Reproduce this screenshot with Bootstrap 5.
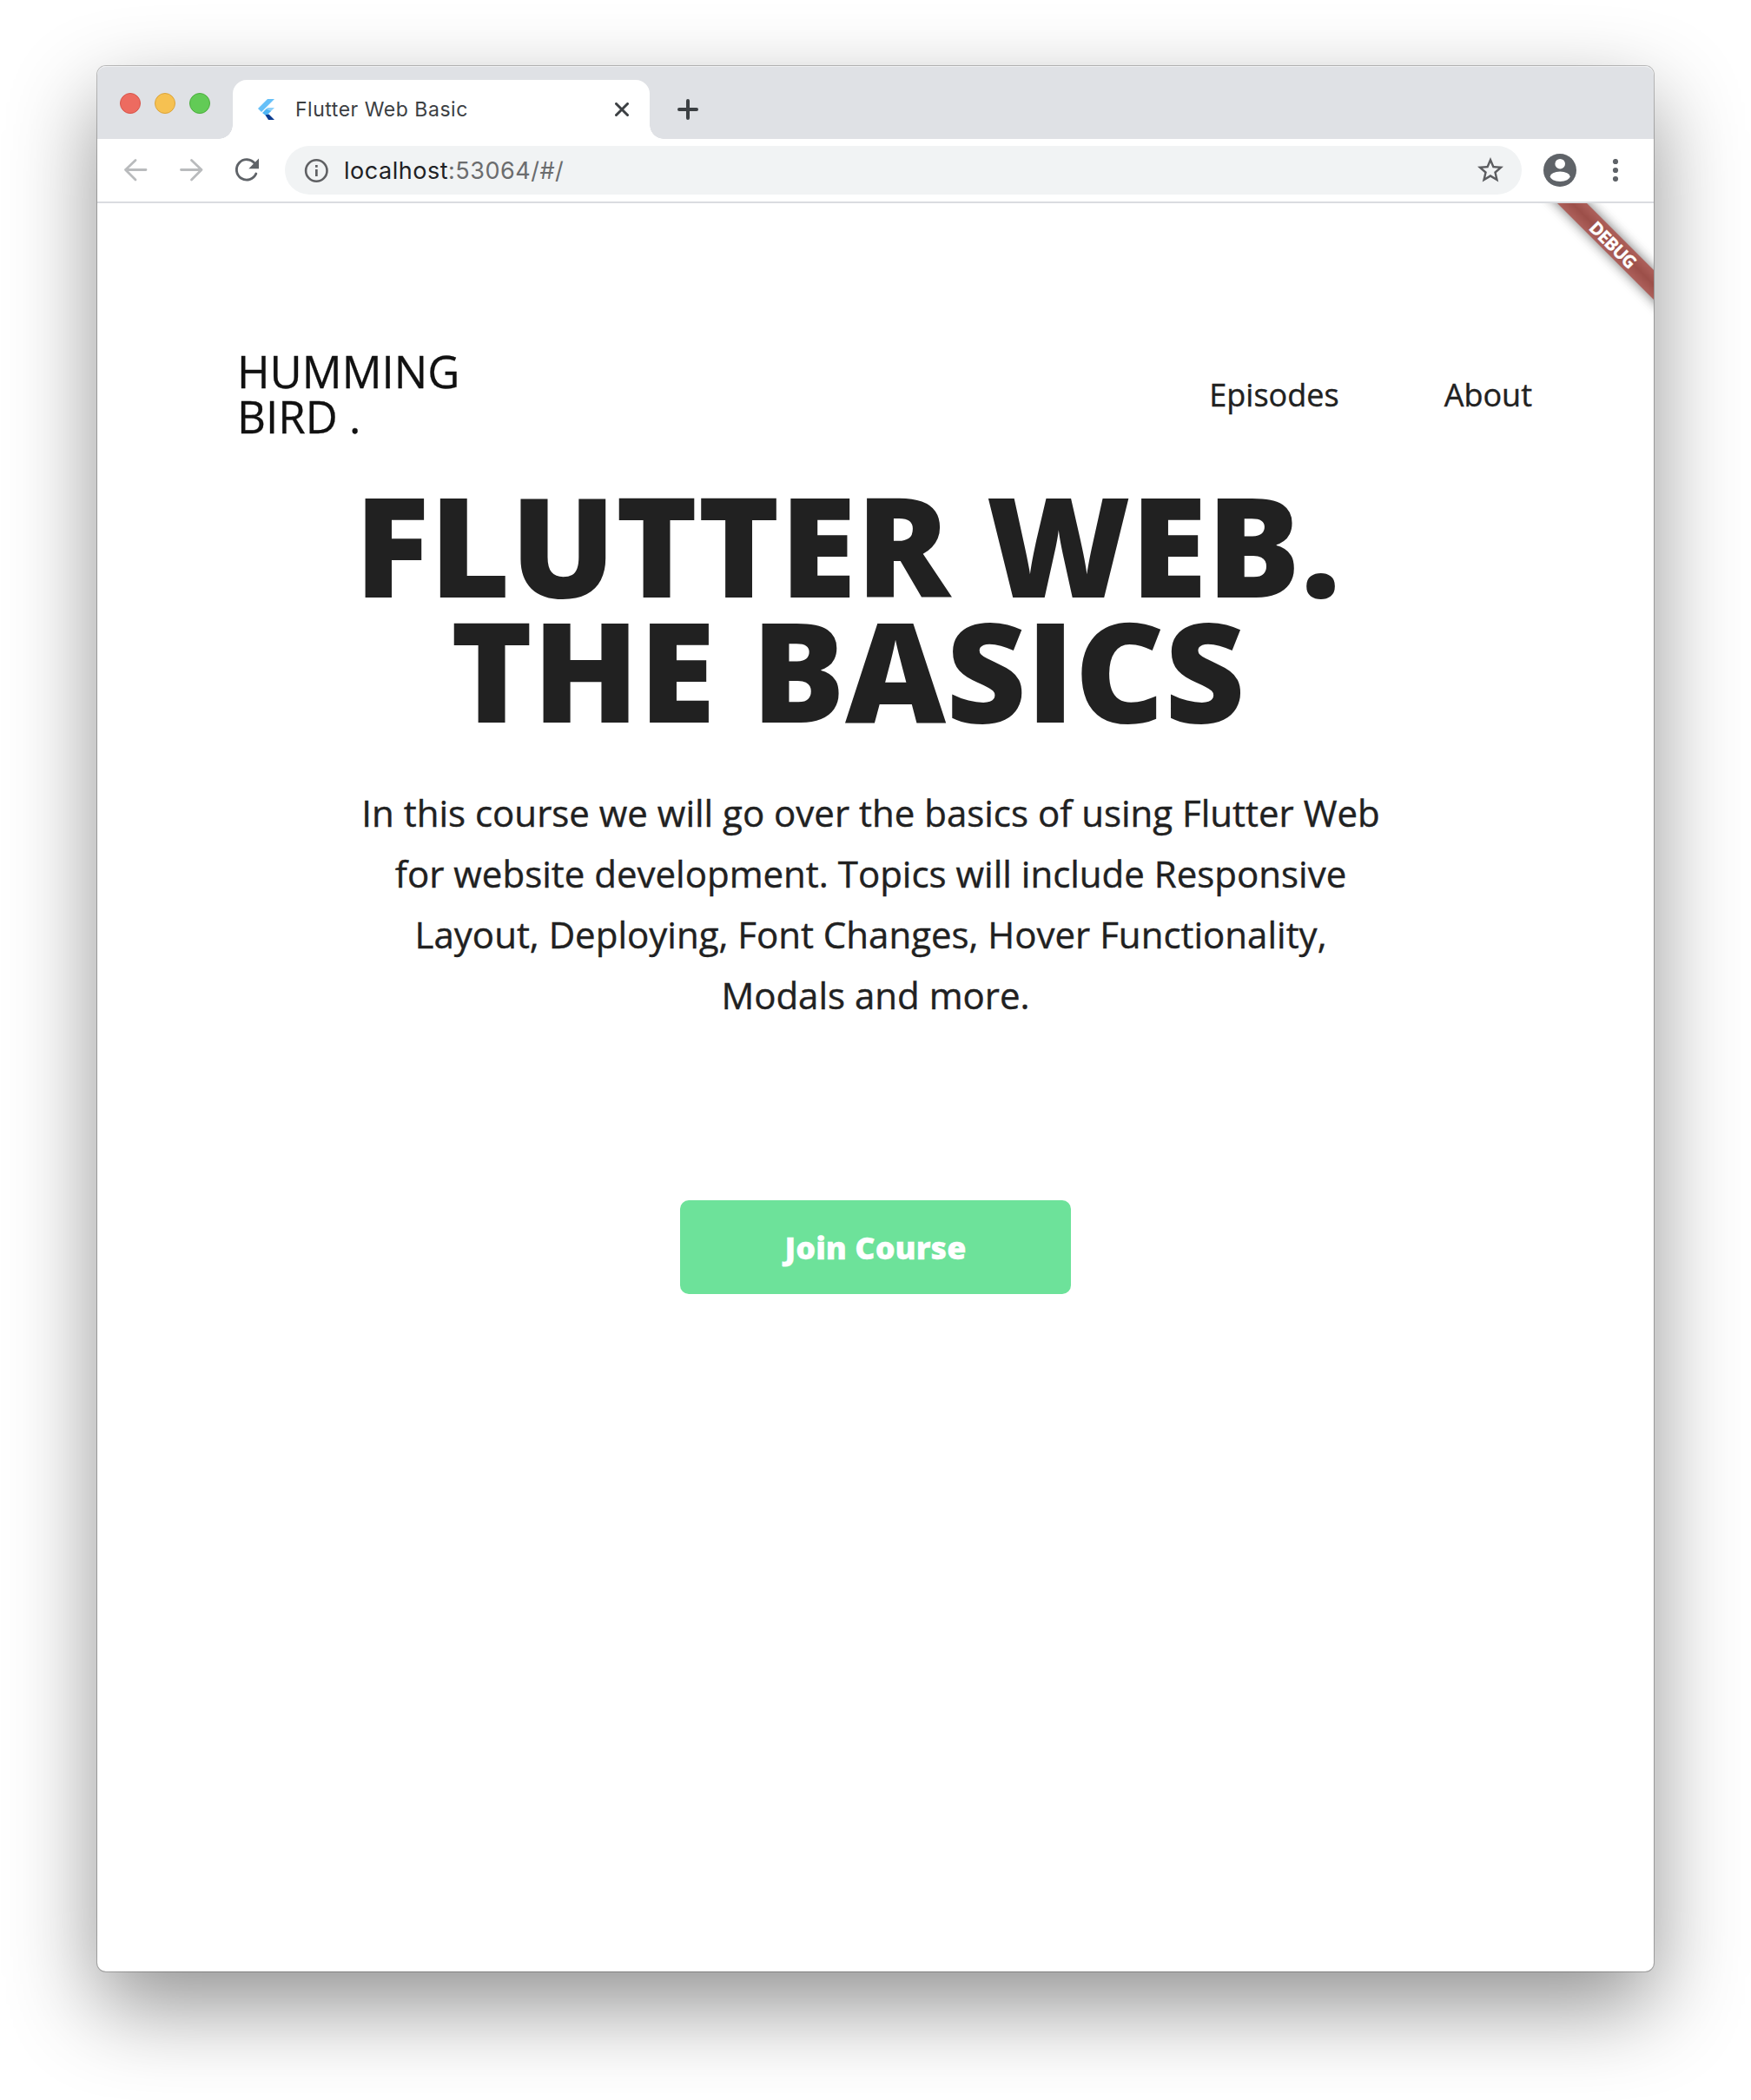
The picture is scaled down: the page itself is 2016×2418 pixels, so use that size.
<!DOCTYPE html>
<html lang="en">
<head>
<meta charset="utf-8">
<meta name="viewport" content="width=device-width, initial-scale=1">
<title>Flutter Web Basic</title>
<link href="https://cdn.jsdelivr.net/npm/bootstrap@5.3.0/dist/css/bootstrap.min.css" rel="stylesheet">
<style>
  body { background: #fff; font-family: "Open Sans", sans-serif; color: #212121; }
  .stage { height: 2418px; padding: 76px 112px 148px; }
  .browser { border-radius: 10px; background: #fff; box-shadow: 0 0 0 1px rgba(0,0,0,.24), 0 40px 100px rgba(0,0,0,.43); }
  .chrome-ui { font-family: Inter, sans-serif; }
  .tabstrip { height: 84px; background: #dfe1e5; border-radius: 10px 10px 0 0; box-shadow: inset 0 1px 0 #eff0f2; padding: 16px 0 0 26px; }
  .lights { gap: 16px; height: 54px; margin-right: 26px; }
  .light { width: 24px; height: 24px; border-radius: 50%; border: 1px solid; }
  .light-close { background: #ed6b60; border-color: #d8554a; }
  .light-min { background: #f6c151; border-color: #dba43b; }
  .light-max { background: #62cb56; border-color: #4cae3d; }
  .tab-item { width: 480px; height: 68px; background: #fff; border-radius: 16px 16px 0 0; padding: 0 24px; color: #3c4043; font-size: 23px; }
  .tab-item::before, .tab-item::after { content: ""; position: absolute; bottom: 0; width: 16px; height: 16px; }
  .tab-item::before { left: -16px; background: radial-gradient(circle at 0 0, transparent 15.5px, #fff 16px); }
  .tab-item::after { right: -16px; background: radial-gradient(circle at 100% 0, transparent 15.5px, #fff 16px); }
  .tab-icon { margin-left: -2px; }
  .tab-label { margin-left: 16px; letter-spacing: .53px; line-height: 68px; }
  .new-tab { margin-left: 32px; height: 68px; }
  .toolbar { height: 74px; border-bottom: 2px solid #dadce0; padding: 0 24px 0 24px; }
  .omnibox { width: 1424px; height: 56px; border-radius: 28px; background: #f1f3f4; padding: 0 18px 0 20px; margin-left: 24px; font-size: 27px; color: #202124; line-height: 56px; }
  .omnibox .rest { color: #6b6c6e; }
  .url { margin-left: 16px; padding-top: 1px; letter-spacing: .52px; }
  .page { height: 2036px; padding: 166px 140px 0 161px; }
  .brand { font-size: 51px; line-height: 52px; color: #111; padding-top: 1px; margin-bottom: -1px; -webkit-text-stroke: .3px #111; }
  .site-nav a { font-size: 36px; line-height: 52px; padding: 6px 0 0; color: #212121; -webkit-text-stroke: .4px #212121; }
  .site-nav { gap: 121px; }
  .hero { width: 1200px; margin: 50px 0 0 135px; }
  .hero h1 { font-size: 160px; font-weight: 800; line-height: 144px; padding-right: 64px; margin: 0 0 59px; white-space: nowrap; }
  .hero p { font-size: 42px; line-height: 70px; margin: 0 0 201px; white-space: nowrap; -webkit-text-stroke: .4px #212121; }
  .btn-join { width: 450px; height: 108px; border: 0; border-radius: 10px; background: #6de29a; color: #fff; font-size: 36px; font-weight: 800; padding: 8px 0 6px; -webkit-text-stroke: .3px #fff; }
  .debug-clip { top: 0; right: 0; width: 200px; height: 200px; overflow: hidden; }
  .debug-band { position: absolute; left: 52.5px; top: 35px; width: 200px; height: 24px; transform: rotate(45deg); }
  .debug-band::before { content: ""; position: absolute; inset: 0 -40px; background: rgba(0,0,0,.55); filter: blur(7px); }
  .debug-band span { position: absolute; inset: 0; background: linear-gradient(#ad605b, #9c4f49 50%, #ad605b); color: #fff; font-size: 20.4px; font-weight: 700; line-height: 25px; text-align: center; letter-spacing: -.8px; padding-left: 1px; -webkit-text-stroke: .3px #fff; }
  svg { display: block; flex: none; }
</style>
</head>
<body>
<div class="stage">
  <div class="browser">
    <div class="chrome-ui">
      <div class="tabstrip d-flex">
        <div class="lights d-flex align-items-center">
          <span class="light light-close"></span><span class="light light-min"></span><span class="light light-max"></span>
        </div>
        <div class="tab-item position-relative d-flex align-items-center">
          <svg class="tab-icon" width="34" height="32" viewBox="0 0 34 32">
            <path d="M18 4h8L11 19l-4-4z" fill="#66c0f8"/>
            <path d="M18 14h8l-7.500 7.500L14 18z" fill="#8dd0fa"/>
            <path d="M16.500 15.500l5.500 2.500-4 3.500 2 1-3.500 1L12 20z" fill="#4db5f5"/>
            <path d="M15.500 22.500l4-1 6.500 6.500h-7z" fill="#0b3a90"/>
          </svg>
          <span class="tab-label">Flutter Web Basic</span>
          <svg class="ms-auto" width="16" height="16" viewBox="0 0 16 16" stroke="#3c4043" stroke-width="3" stroke-linecap="round"><path d="M1.500 1.500l13 13M14.500 1.500l-13 13"/></svg>
        </div>
        <div class="new-tab d-flex align-items-center">
          <svg width="24" height="24" viewBox="0 0 24 24" stroke="#3c4043" stroke-width="4" stroke-linecap="round"><path d="M12 2v20M2 12h20"/></svg>
        </div>
      </div>
      <div class="toolbar d-flex align-items-center">
        <svg width="40" height="40" viewBox="0 0 40 40" fill="none" stroke="#b9bbbd" stroke-width="2.800" stroke-linecap="round" stroke-linejoin="round"><path d="M32 19.500H8.500M20 8.500l-11.500 11 11.500 11.500"/></svg>
        <svg class="ms-4" width="40" height="40" viewBox="0 0 40 40" fill="none" stroke="#b9bbbd" stroke-width="2.800" stroke-linecap="round" stroke-linejoin="round"><path d="M8.500 19.500H32M20.500 8.500l11.500 11-11.500 11.500"/></svg>
        <svg class="ms-4" width="40" height="40" viewBox="0 0 40 40" fill="none"><path d="M29.300 12.200A11.700 11.700 0 1 0 30.800 24" stroke="#5f6368" stroke-width="2.900" stroke-linecap="round"/><path d="M34 6.500v11.700H22.300z" fill="#5f6368"/></svg>
        <div class="omnibox d-flex align-items-center">
          <svg width="32" height="32" viewBox="0 0 32 32" fill="none"><circle cx="16.300" cy="16.500" r="12.200" stroke="#5f6063" stroke-width="2.600"/><path d="M15 15h2.700v8H15zM15 10h2.700v2.700H15z" fill="#5f6063"/></svg>
          <span class="url">localhost<span class="rest">:53064/#/</span></span>
          <svg class="ms-auto" width="36" height="36" viewBox="0 0 24 24" fill="#5c5d60"><path d="M22 9.240l-7.190-.62L12 2 9.190 8.630 2 9.240l5.460 4.730L5.820 21 12 17.270 18.180 21l-1.630-7.030L22 9.240zM12 15.400l-3.760 2.270 1-4.280-3.320-2.880 4.380-.38L12 6.100l1.710 4.040 4.380.38-3.320 2.880 1 4.280L12 15.400z"/></svg>
        </div>
        <svg class="ms-4" width="40" height="40" viewBox="0 0 40 40"><circle cx="20" cy="20" r="19" fill="#5f6368"/><circle cx="20.200" cy="12.700" r="5.800" fill="#fff"/><ellipse cx="20.200" cy="27.300" rx="11.400" ry="5.700" fill="#fff"/></svg>
        <svg class="ms-auto me-3" width="8" height="26" viewBox="0 0 8 26" fill="#5f6368"><circle cx="4" cy="3" r="3.100"/><circle cx="4" cy="13" r="3.100"/><circle cx="4" cy="23" r="3.100"/></svg>
      </div>
    </div>
    <main class="page position-relative">
      <div class="debug-clip position-absolute"><div class="debug-band"><span>DEBUG</span></div></div>
      <header class="d-flex justify-content-between align-items-center">
        <div class="brand">HUMMING<br>BIRD .</div>
        <nav class="site-nav nav"><a class="nav-link" href="#">Episodes</a><a class="nav-link" href="#">About</a></nav>
      </header>
      <section class="hero text-center">
        <h1>FLUTTER WEB.<br>THE BASICS</h1>
        <p>In this course we will go over the basics of using Flutter Web&nbsp;<br>for website development. Topics will include Responsive&nbsp;<br>Layout, Deploying, Font Changes, Hover Functionality,&nbsp;<br>Modals and more.</p>
        <button class="btn btn-join" type="button">Join Course</button>
      </section>
    </main>
  </div>
</div>
<script src="https://cdn.jsdelivr.net/npm/bootstrap@5.3.0/dist/js/bootstrap.bundle.min.js"></script>
</body>
</html>
